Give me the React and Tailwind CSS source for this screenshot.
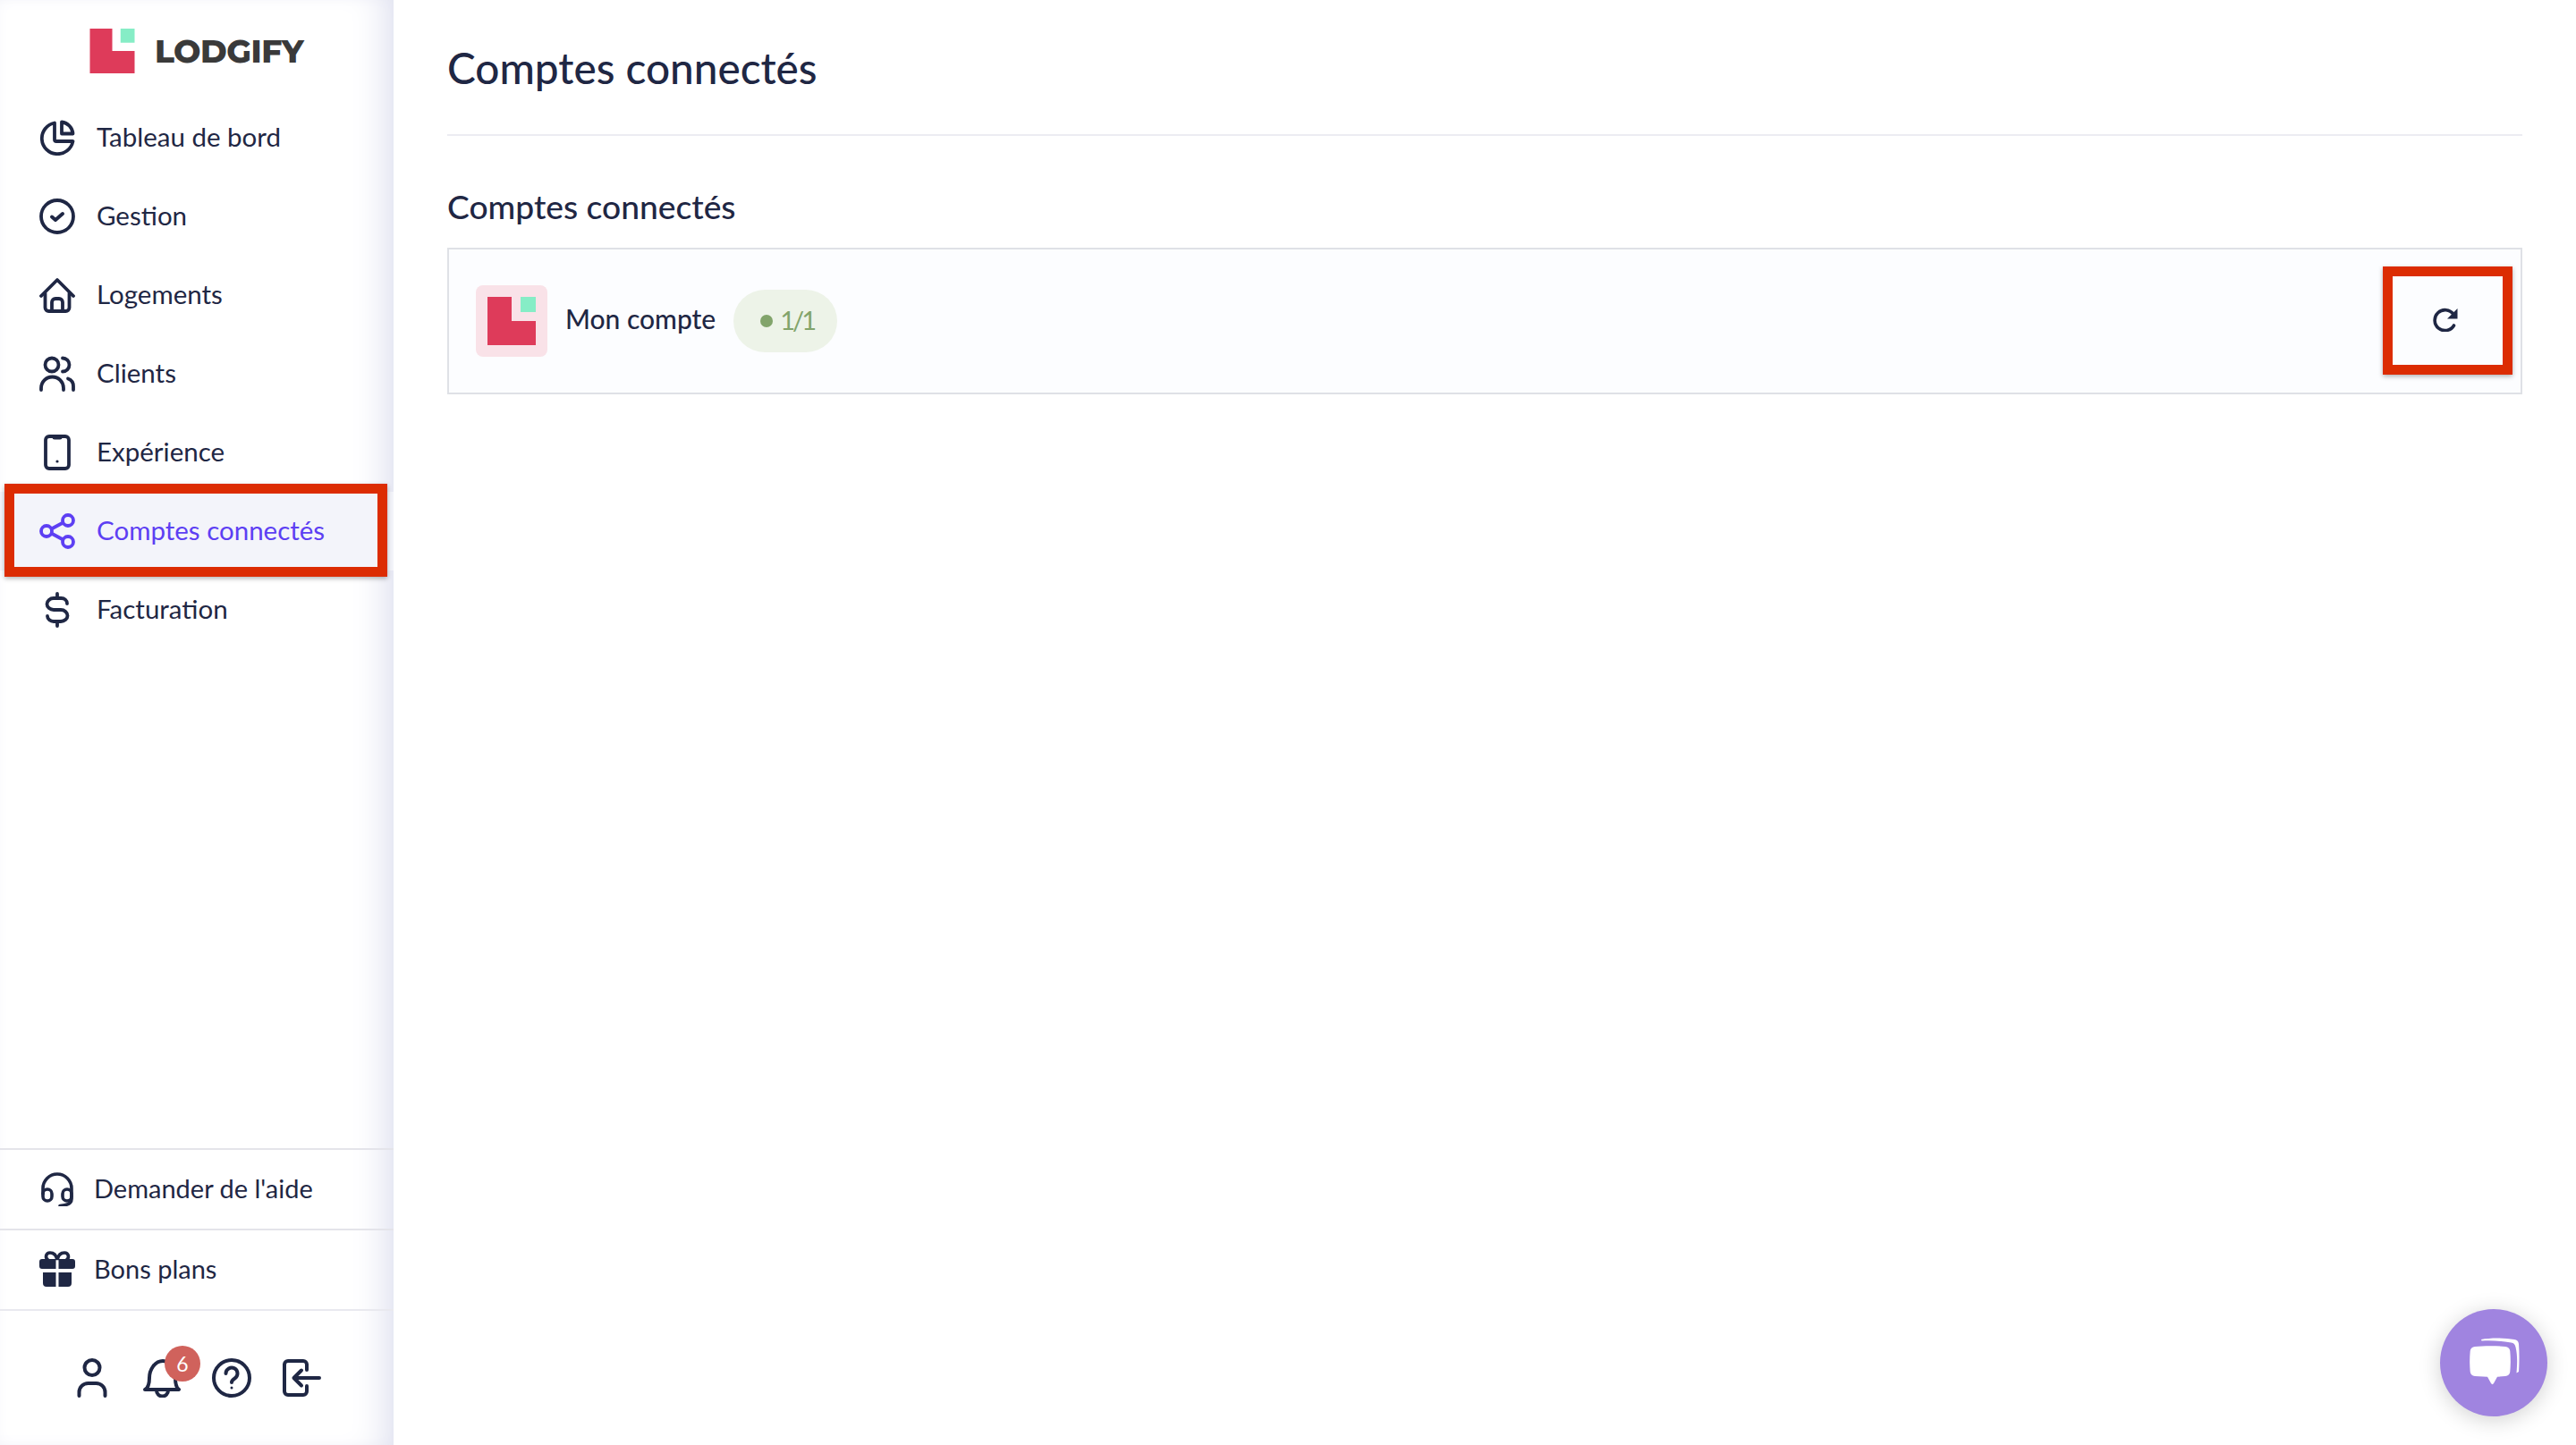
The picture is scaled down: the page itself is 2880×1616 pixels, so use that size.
import React from 'react';

const Pie = () => (
  <svg viewBox="0 0 40 40" className="w-10 h-10" fill="none" stroke="currentColor" strokeWidth="3.8" strokeLinejoin="round" strokeLinecap="round">
    <path d="M17 3.500A17.500 17.500 0 1 0 37.500 24H19a2 2 0 0 1-2-2Z" />
    <path d="M25 2.500A14 14 0 0 1 37.500 15.500H25Z" />
  </svg>
);
const Check = () => (
  <svg viewBox="0 0 40 40" className="w-10 h-10" fill="none" stroke="currentColor" strokeWidth="3.8" strokeLinecap="round" strokeLinejoin="round">
    <circle cx="20" cy="20" r="18" />
    <path d="M14 20.500l4 3.500 8-7" strokeWidth="4" />
  </svg>
);
const Home = () => (
  <svg viewBox="0 0 40 40" className="w-10 h-10" fill="none" stroke="currentColor" strokeWidth="3.8" strokeLinecap="round" strokeLinejoin="round">
    <path d="M2 21 20 3l18 18" />
    <path d="M6.500 18v16a4 4 0 0 0 4 4h19a4 4 0 0 0 4-4V18" />
    <path d="M14 38V28a4 4 0 0 1 4-4h4a4 4 0 0 1 4 4v10" />
  </svg>
);
const Users = () => (
  <svg viewBox="0 0 40 40" className="w-10 h-10" fill="none" stroke="currentColor" strokeWidth="3.8" strokeLinecap="round">
    <circle cx="14" cy="10" r="7.500" />
    <path d="M2 38v-2a12.500 12.500 0 0 1 25 0v2" />
    <path d="M26 2.500a7.500 7.500 0 0 1 0 15" />
    <path d="M32 25.500a9 9 0 0 1 6 8.500v4" />
  </svg>
);
const Phone = () => (
  <svg viewBox="0 0 40 40" className="w-10 h-10" fill="none" stroke="currentColor" strokeWidth="3.8" strokeLinecap="round">
    <rect x="7" y="2" width="26" height="36" rx="4" />
    <path d="M17 3h6" strokeWidth="5" />
    <circle cx="20" cy="30" r="1.600" fill="currentColor" stroke="none" />
  </svg>
);
const Share = () => (
  <svg viewBox="0 0 40 40" className="w-10 h-10" fill="none" stroke="currentColor" strokeWidth="3.8">
    <circle cx="8" cy="20" r="6" />
    <circle cx="32" cy="8" r="6" />
    <circle cx="32" cy="32" r="6" />
    <path d="M13.500 17.500 26.500 10.500M13.500 22.500l13 7" />
  </svg>
);
const Dollar = () => (
  <svg viewBox="0 0 40 40" className="w-10 h-10" fill="none" stroke="currentColor" strokeWidth="3.8" strokeLinecap="round">
    <path d="M31 13c0-3.500-3-6-6.500-6h-8.500C12 7 8.500 10 8.500 13.500S12 20 16 20h8c4 0 7.500 3 7.500 6.500S28 33 24 33h-8c-3.500 0-7-2.500-7-6" />
    <path d="M20 2v5M20 33v5" />
  </svg>
);
const Headset = () => (
  <svg viewBox="0 0 40 40" className="w-10 h-10" fill="none" stroke="currentColor" strokeWidth="3.6" strokeLinecap="round">
    <path d="M4 26V20a16 16 0 0 1 32 0v6" />
    <rect x="4" y="21" width="10" height="13" rx="5" />
    <rect x="26" y="21" width="10" height="13" rx="5" />
    <path d="M36 28v4c0 4-4 7-13 7.500" />
  </svg>
);
const Gift = () => (
  <svg viewBox="0 0 40 40" className="w-10 h-10" fill="currentColor">
    <path d="M3 9h15.500v11H3a3 3 0 0 1-3-3v-5a3 3 0 0 1 3-3ZM21.500 9H37a3 3 0 0 1 3 3v5a3 3 0 0 1-3 3H21.500ZM4 24h14.500v16H8a4 4 0 0 1-4-4ZM21.500 24H36v12a4 4 0 0 1-4 4H21.500Z" />
    <path d="M20 10c-1-5-4-8-8-8-5 0-6 6-2 8M20 10c1-5 4-8 8-8 5 0 6 6 2 8" fill="none" stroke="currentColor" strokeWidth="3.600" />
  </svg>
);
const User = () => (
  <svg viewBox="0 0 44 44" className="w-11 h-11" fill="none" stroke="currentColor" strokeWidth="4" strokeLinecap="round">
    <circle cx="22" cy="10.500" r="8.500" />
    <path d="M7.500 42v-4a10 10 0 0 1 10-10h9a10 10 0 0 1 10 10v4" />
  </svg>
);
const Bell = () => (
  <svg viewBox="0 0 44 44" className="w-11 h-11" fill="none" stroke="currentColor" strokeWidth="4" strokeLinecap="round" strokeLinejoin="round">
    <path d="M3 35c4-2 5-6 5-13 0-9 6-19 15-19s14 9 14 19c0 7 1 11 4 13Z" />
    <path d="M16 36a6.500 6.500 0 0 0 13 0" />
  </svg>
);
const Help = () => (
  <svg viewBox="0 0 44 44" className="w-11 h-11" fill="none" stroke="currentColor" strokeWidth="4" strokeLinecap="round">
    <circle cx="22" cy="22" r="20" />
    <path d="M15.500 17a6.500 6.500 0 1 1 10 5.500c-2 1.300-3.500 2.500-3.500 4.500" />
    <circle cx="22" cy="33" r="1.500" fill="currentColor" stroke="none" />
  </svg>
);
const Logout = () => (
  <svg viewBox="0 0 44 44" className="w-11 h-11" fill="none" stroke="currentColor" strokeWidth="4" strokeLinecap="round" strokeLinejoin="round">
    <path d="M28 13V7a4 4 0 0 0-4-4H7a4 4 0 0 0-4 4v30a4 4 0 0 0 4 4h17a4 4 0 0 0 4-4v-6" />
    <path d="M42 22H14M22 13.500 13.500 22l8.500 8.500" />
  </svg>
);
const Refresh = () => (
  <svg viewBox="0 0 28 28" className="w-7 h-7" fill="none">
    <path d="M23 8.500A11.500 11.500 0 1 0 23.500 21" stroke="currentColor" strokeWidth="3.600" strokeLinecap="round" />
    <path d="M27.500 2v11.500H16Z" fill="currentColor" />
  </svg>
);

// red square + mint corner, shared by sidebar and account tile
const LogoMark = ({ className }) => (
  <svg viewBox="0 0 54 54" className={className}>
    <path d="M0 0h27v27h27v27H0Z" fill="#de3b5a" />
    <rect x="37" y="0" width="17" height="17" fill="#86edc6" />
  </svg>
);

const navItems = [
  { label: 'Tableau de bord', icon: Pie },
  { label: 'Gestion', icon: Check },
  { label: 'Logements', icon: Home },
  { label: 'Clients', icon: Users },
  { label: 'Expérience', icon: Phone },
  { label: 'Comptes connectés', icon: Share, active: true },
  { label: 'Facturation', icon: Dollar },
];

const App = () => {
  return (
    <div className="flex h-screen w-full bg-white text-[#1f2744] font-[Lato,sans-serif] overflow-hidden">
      <aside className="relative flex flex-col w-[440px] shrink-0 bg-white shadow-[inset_-34px_0_40px_-26px_#dcdeee,inset_0_0_24px_-14px_#e4e5f0]">
        <div className="flex items-center h-[110px] pl-[100px] pt-[4px] gap-[22px]">
          <LogoMark className="w-[51px] h-[50px]" />
          <span className="text-[36px] font-[Montserrat,Inter,sans-serif] font-extrabold text-[#3a3a3a] tracking-[-0.5px]">LODGIFY</span>
        </div>
        <nav className="flex flex-col flex-1">
          {navItems.map(({ label, icon: Icon, active }) => (
            <div
              key={label}
              className={
                active
                  ? 'relative flex items-center gap-6 h-[88px] pl-11 text-[29.5px] text-[#5d3ff3] bg-[#f3f4fa]'
                  : 'flex items-center gap-6 h-[88px] pl-11 text-[29.5px]'
              }
            >
              <Icon />
              <span className="mb-[1px]">{label}</span>
              {active && (
                <div className="absolute left-[5px] right-[7px] top-[-9px] bottom-[-7px] border-[11px] border-[#dc2c02] shadow-[0_2px_5px_rgba(0,0,0,0.3)]" />
              )}
            </div>
          ))}
        </nav>
        <div className="flex items-center gap-[21px] h-[90px] pl-11 pb-[3px] text-[29px] border-t-2 border-[#e4e4ea]">
          <Headset />
          <span>Demander de l'aide</span>
        </div>
        <div className="flex items-center gap-[21px] h-[90px] pl-11 pb-[3px] text-[29px] border-t-2 border-[#e4e4ea]">
          <Gift />
          <span>Bons plans</span>
        </div>
        <div className="flex items-center h-[152px] pl-[81px] gap-[34px] border-t-2 border-[#e9e9ef]">
          <User />
          <div className="relative">
            <Bell />
            <span className="absolute top-[-14px] left-[25px] flex items-center justify-center w-10 h-10 rounded-full bg-[#d0625c] text-white text-[23px]">6</span>
          </div>
          <Help />
          <Logout />
        </div>
      </aside>

      <main className="flex-1 px-[60px]">
        <div className="flex items-center h-[152px] pt-[2px] border-b-2 border-[#ececf2]">
          <h1 className="text-[47.7px] font-medium">Comptes connectés</h1>
        </div>
        <h2 className="mt-[54px] mb-[21px] text-[37.2px] leading-[50px] font-medium">Comptes connectés</h2>
        <div className="flex items-center justify-between h-[164px] pl-[30px] bg-[#fcfdff] border-2 border-[#dfe1e6]">
          <div className="flex items-center">
            <div className="flex items-center justify-center w-20 h-20 rounded-lg bg-[#f9e2e8]">
              <LogoMark className="w-[54px] h-[54px]" />
            </div>
            <span className="ml-5 mb-[5px] text-[30px] font-medium">Mon compte</span>
            <div className="flex items-center gap-[8px] ml-[20px] h-[70px] w-[116px] pl-[30px] rounded-full bg-[#edf3e8] text-[#82a46b] text-[29px]">
              <span className="w-[14px] h-[14px] rounded-full bg-[#82a46b]" />
              <span className="tracking-[-3px] mb-[2px]">1/1</span>
            </div>
          </div>
          <div className="relative flex items-center justify-center w-[145px] h-[121px] mr-[9px] mb-[1px]">
            <span className="mr-[6px] mb-[4px]"><Refresh /></span>
            <div className="absolute inset-0 border-[11px] border-[#dc2c02] shadow-[0_2px_5px_rgba(0,0,0,0.3)]" />
          </div>
        </div>
      </main>

      <button className="absolute right-[32px] bottom-[32px] flex items-center justify-center w-[120px] h-[120px] rounded-full bg-[#a084e0] shadow-[0_4px_24px_rgba(0,0,0,0.18)]">
        <svg viewBox="0 0 64 64" className="w-16 h-16" fill="#fff">
          <path d="M11 14c10-1 24-1 34 0 3 .3 5 2 5.300 5 .7 8 .7 15 0 23-.3 3-2.300 4.700-5.300 5l-9 .7-4 7.300c-1 1.500-2 1.500-3 0l-4-7.300-14-.7c-3-.3-5-2-5.300-5-.7-8-.7-15 0-23 .3-3 2.300-4.700 5.300-5Z" />
          <path d="M18 6c10-2 26-2 37 0 3 .5 4.700 2 5 5 .7 10 .7 20 0 31l-2.500 1.500c1-13 1-20-1-29-.7-3-2-4.500-5-5-11-2-22-2.500-33-2Z" />
        </svg>
      </button>
    </div>
  );
};

export default App;
